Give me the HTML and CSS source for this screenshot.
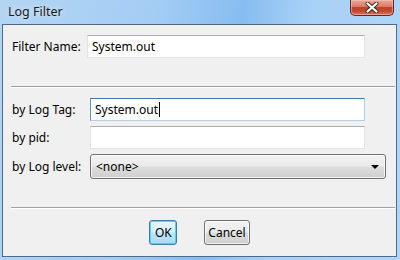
FILE: index.html
```html
<!DOCTYPE html>
<html lang="en">
  <head>
    <meta charset="UTF-8">
    <title>Log Filter</title>
    <link rel="stylesheet" href="styles.css">
  </head>
  <body>
    <div class="window">
      <div class="titlebar">
        <span class="title">Log Filter</span>
        <button class="close" type="button" aria-label="Close">
          <svg width="14" height="11" viewBox="0 0 14 11">
            <path d="M2.5 1.5 L11.5 9.5 M11.5 1.5 L2.5 9.5" stroke="#3a2a2a" stroke-width="4" stroke-linecap="round"/>
            <path d="M2.5 1.5 L11.5 9.5 M11.5 1.5 L2.5 9.5" stroke="#fff" stroke-width="2.2" stroke-linecap="round"/>
          </svg>
        </button>
      </div>
      <div class="client">
        <div class="row name-row">
          <label class="lbl">Filter Name:</label>
          <div class="field">System.out</div>
        </div>

        <hr class="sep">

        <div class="group">
          <label class="lbl">by Log Tag:</label>
          <div class="field focused">System.out<span class="caret"></span></div>

          <label class="lbl">by pid:</label>
          <div class="field"></div>

          <label class="lbl">by Log level:</label>
          <div class="select">
            <span>&lt;none&gt;</span>
            <span class="arrow"></span>
          </div>
        </div>

        <hr class="sep">

        <div class="buttons">
          <button class="btn default" type="button">OK</button>
          <button class="btn" type="button">Cancel</button>
        </div>
      </div>
    </div>
  </body>
</html>
```

FILE: styles.css
```css
html, body {
  margin: 0;
  padding: 0;
  overflow: hidden;
}
body {
  font-family: "Noto Sans", "Open Sans", Arial, sans-serif;
  font-size: 12px;
  color: #000;
}
.window {
  width: 400px;
  height: 260px;
  box-sizing: border-box;
  background: linear-gradient(100deg, #b3d5f3 0%, #a4cdf4 35%, #86bdf0 55%, #a9d1f6 70%, #b1d5f5 100%);
  display: flex;
  flex-direction: column;
}
.titlebar {
  height: 24px;
  display: flex;
  justify-content: space-between;
  align-items: flex-start;
  padding-left: 8px;
  padding-right: 6px;
}
.title {
  margin-top: 3px;
  font-size: 12.5px;
  color: #1a1a1a;
  text-shadow: 0 0 6px rgba(255, 255, 255, 0.8);
}
.close {
  width: 44px;
  height: 16px;
  margin: 0;
  padding: 0;
  border: 1px solid #5b2c24;
  border-top: none;
  border-radius: 0 0 5px 5px;
  background: linear-gradient(#e9a899 0%, #d77a65 45%, #c2412b 50%, #c24a33 75%, #dd7b62 100%);
  box-shadow: inset 0 0 0 1px rgba(255, 200, 190, 0.5);
  display: flex;
  align-items: center;
  justify-content: center;
}
.client {
  flex: 1;
  margin: 0 3px 3px 2px;
  border: 1px solid #4f6a88;
  background: #f0f0f0;
  padding: 10px 0 0 9px;
}
.row {
  display: flex;
  align-items: center;
}
.lbl {
  color: #000;
  white-space: nowrap;
}
.name-row .lbl {
  width: 75px;
}
.field {
  box-sizing: border-box;
  width: 278px;
  height: 23px;
  background: #fff;
  border: 1px solid #e2e3ea;
  border-top-color: #abadb3;
  padding: 0 4px;
  line-height: 21px;
  display: flex;
  align-items: center;
}
.field.focused {
  border-color: #b5cfe7;
  border-top-color: #3d7bad;
  border-left-color: #5b97c8;
}
.group .field {
  width: 275px;
}
.caret {
  display: inline-block;
  width: 1px;
  height: 15px;
  background: #000;
  margin-left: 1px;
}
.sep {
  margin: 28px 0 0 -1px;
  width: 384px;
  height: 0;
  border: none;
  border-top: 1px solid #a0a0a0;
  border-bottom: 1px solid #fff;
}
.group {
  margin-top: 10px;
  display: grid;
  grid-template-columns: 78px auto;
  row-gap: 5px;
  align-items: center;
}
.select {
  box-sizing: border-box;
  width: 296px;
  height: 25px;
  border: 1px solid #707070;
  border-radius: 3px;
  background: linear-gradient(#f2f2f2 0%, #ebebeb 48%, #dddddd 52%, #cfcfcf 100%);
  box-shadow: inset 0 0 0 1px rgba(255, 255, 255, 0.7);
  display: flex;
  align-items: center;
  justify-content: space-between;
  padding: 0 6px 0 5px;
}
.arrow {
  width: 0;
  height: 0;
  border-left: 4px solid transparent;
  border-right: 4px solid transparent;
  border-top: 4px solid #000;
  margin-top: 1px;
}
.buttons {
  display: flex;
  justify-content: center;
  gap: 27px;
  margin-top: 11px;
  padding-right: 9px;
}
.btn {
  box-sizing: border-box;
  height: 25px;
  margin: 0;
  padding: 0 3px;
  font-family: "Noto Sans", "Open Sans", Arial, sans-serif;
  font-size: 12px;
  color: #000;
  border: 1px solid #707070;
  border-radius: 3px;
  background: linear-gradient(#f2f2f2 0%, #ebebeb 48%, #dddddd 52%, #cfcfcf 100%);
  box-shadow: inset 0 0 0 1px rgba(255, 255, 255, 0.7);
}
.btn.default {
  width: 28px;
  border-color: #3c7fb1;
  background: linear-gradient(#eaf6fd 0%, #d9f0fc 48%, #bee6fd 52%, #a7d9f5 100%);
  box-shadow: inset 0 0 0 1px #48d5fb;
}
```
